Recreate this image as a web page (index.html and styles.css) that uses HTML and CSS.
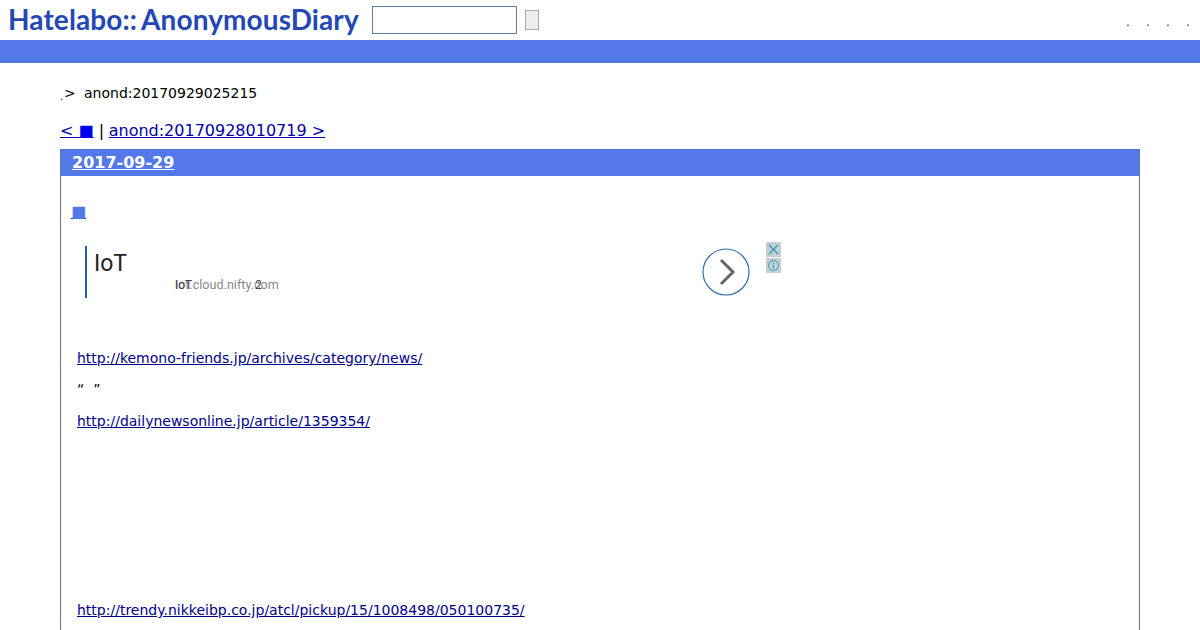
FILE: index.html
```html
<!DOCTYPE html>
<html lang="ja">
<head>
  <meta charset="UTF-8">
  <title>anond:20170929025215</title>
  <link rel="stylesheet" href="styles.css">
</head>
<body>
  <div class="top">
    <a class="logo" href="#">Hatelabo::<span class="logo-name">AnonymousDiary</span></a>
    <form class="search">
      <input class="search-box" type="text">
      <button class="search-btn" type="button"></button>
    </form>
    <ul class="top-links">
      <li>.</li>
      <li>.</li>
      <li>.</li>
      <li>.</li>
    </ul>
  </div>
  <div class="bar"></div>

  <div class="main">
    <p class="crumb"><span class="crumb-dot">.</span><span class="crumb-gt">&gt;</span>anond:20170929025215</p>
    <p class="pager"><a href="#">&lt; <span class="pager-sq">■</span></a> | <a class="pager-next" href="#">anond:20170928010719 &gt;</a></p>

    <div class="day">
      <h2 class="day-head"><a href="#">2017-09-29</a></h2>
      <div class="day-body">
        <a class="square" href="#">■</a>

        <div class="ad">
          <div class="ad-text">
            <div class="ad-title">IoT</div>
            <div class="ad-url">iot.cloud.nifty.com<span class="ad-over">IoT</span><span class="ad-over ad-over-2">2</span></div>
          </div>
          <div class="ad-arrow">
            <svg width="48" height="48" viewBox="0 0 48 48">
              <circle cx="24" cy="24" r="23" fill="#fff" stroke="#2b6cb0" stroke-width="1.2"/>
              <path d="M19 12 L31 24 L19 36" fill="none" stroke="#666" stroke-width="3"/>
            </svg>
          </div>
          <div class="ad-btns">
            <span class="ad-btn">
              <svg width="15" height="15" viewBox="0 0 15 15"><path d="M3 3 L12 12 M12 3 L3 12" stroke="#2b9cc0" stroke-width="1.3"/></svg>
            </span>
            <span class="ad-btn">
              <svg width="15" height="15" viewBox="0 0 15 15"><circle cx="7.5" cy="7.5" r="5" fill="none" stroke="#2b9cc0"/><path d="M7.5 4.5 V5.8 M7.5 6.8 V10.5" stroke="#2b9cc0" stroke-width="1.2"/></svg>
            </span>
          </div>
        </div>

        <p class="line"><a href="#">http://kemono-friends.jp/archives/category/news/</a></p>
        <p class="line quote">“&nbsp;&nbsp;”</p>
        <p class="line"><a href="#">http://dailynewsonline.jp/article/1359354/</a></p>
        <p class="line last"><a href="#">http://trendy.nikkeibp.co.jp/atcl/pickup/15/1008498/050100735/</a></p>
      </div>
    </div>
  </div>
</body>
</html>
```

FILE: styles.css
```css
html, body {
  height: 630px;
  overflow: hidden;
}

body {
  margin: 0;
  background: #fff;
  color: #000;
  font-family: "DejaVu Sans", sans-serif;
  font-size: 14px;
}

a {
  color: #00008b;
}

p {
  margin: 0;
}

.top {
  display: flex;
  align-items: center;
  height: 40px;
  padding: 0 8px;
}

.logo {
  width: 364px;
  padding-bottom: 2px;
  color: #2347b5;
  font-family: "Lato", sans-serif;
  font-size: 28px;
  font-weight: 700;
  letter-spacing: 0.1px;
  text-decoration: none;
  white-space: nowrap;
}

.logo-name {
  margin-left: 4px;
}

.search {
  display: flex;
  align-items: center;
  gap: 8px;
}

.search-box {
  box-sizing: border-box;
  width: 145px;
  height: 28px;
  margin: 0;
  border: 1px solid #5b7bb5;
  padding: 0;
}

.search-btn {
  box-sizing: border-box;
  width: 14px;
  height: 20px;
  padding: 0;
  border: 1px solid #aaa;
  background: #eee;
}

.top-links {
  display: flex;
  gap: 16px;
  margin: 0 0 0 auto;
  padding: 3px 2px 0 0;
  list-style: none;
  font-size: 12px;
  color: #333;
}

.top-links li {
  width: 4px;
}

.bar {
  height: 23px;
  background: #5279e7;
}

.main {
  padding: 0 60px;
}

.crumb {
  display: flex;
  align-items: baseline;
  height: 17px;
  margin-top: 22px;
  line-height: 17px;
}

.crumb-dot {
  width: 4px;
  font-size: 10px;
  transform: translateY(2px);
}

.crumb-gt {
  width: 20px;
}

.pager {
  margin-top: 19px;
  height: 19px;
  font-size: 16px;
  line-height: 19px;
}

.pager a {
  color: #0000aa;
}

.pager .pager-sq {
  color: #0000ee;
}

.pager-next {
  margin-left: -0.5px;
}

.day {
  margin-top: 9px;
  border: 1px solid #5875b8;
  border-top-color: #5279e7;
  border-bottom: 0;
  height: 500px;
}

.day-head {
  height: 26px;
  margin: 0;
  padding-left: 11px;
  background: #5279e7;
  font-size: 16px;
  line-height: 25px;
}

.day-head a {
  color: #fff;
}

.day-body {
  padding: 27px 0 0 10px;
}

.square {
  display: block;
  width: 15px;
  height: 18px;
  color: #5279e7;
  font-size: 16px;
  line-height: 18px;
  text-decoration-color: #00008b;
}

.ad {
  display: flex;
  align-items: flex-start;
  margin-top: 20px;
  padding-left: 14px;
  height: 64px;
}

.ad-text {
  box-sizing: border-box;
  position: relative;
  width: 617px;
  height: 52px;
  margin-top: 5px;
  border-left: 2px solid #1f5aa6;
  padding-left: 7px;
  font-family: "Roboto", sans-serif;
}

.ad-title {
  color: #222;
  font-size: 23px;
  line-height: 36px;
}

.ad-url {
  position: relative;
  margin-left: 81px;
  color: #888;
  font-size: 12.6px;
  line-height: 14px;
  margin-top: -4px;
}

.ad-over {
  position: absolute;
  left: 0;
  top: 0;
  color: #444;
  font-size: 12px;
}

.ad-over-2 {
  left: 80px;
}

.ad-arrow {
  width: 64px;
  height: 48px;
  margin-top: 7px;
}

.ad-btns {
  display: flex;
  flex-direction: column;
  gap: 1px;
  margin-top: 1px;
}

.ad-btn {
  display: block;
  width: 15px;
  height: 15px;
  background: #c6ced2;
}

.line {
  margin-left: 6px;
  height: 17px;
  line-height: 17px;
  font-size: 14px;
}

.ad + .line {
  margin-top: 45px;
}

.quote {
  margin-top: 14px;
}

.quote + .line {
  margin-top: 15px;
}

.line.last {
  margin-top: 172px;
}
```
